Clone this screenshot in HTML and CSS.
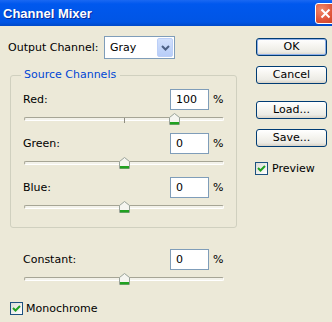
FILE: index.html
```html
<!DOCTYPE html>
<html lang="en">
  <head>
    <meta charset="UTF-8" />
    <title>Channel Mixer</title>
    <link rel="stylesheet" href="styles.css">
  </head>
  <body>
    <div class="titlebar">
      <span class="title">Channel Mixer</span>
      <span class="close-btn">
        <svg width="11" height="11" viewBox="0 0 11 11">
          <path d="M1.5 1.5 L9.5 9.5 M9.5 1.5 L1.5 9.5" stroke="#fff" stroke-width="2" />
        </svg>
      </span>
    </div>

    <div class="dialog">
      <div class="main-col">
        <div class="output-row">
          <span class="output-label">Output Channel:</span>
          <div class="combo">
            <span class="combo-value">Gray</span>
            <span class="combo-btn">
              <svg width="9" height="6" viewBox="0 0 9 6">
                <path d="M1 1 L4.5 4.5 L8 1" fill="none" stroke="#4D6185" stroke-width="2" />
              </svg>
            </span>
          </div>
        </div>

        <fieldset class="group">
          <legend>Source Channels</legend>

          <div class="channel">
            <div class="value-row">
              <span class="value-label">Red:</span>
              <span class="value-box">100</span>
              <span class="unit">%</span>
            </div>
            <div class="slider">
              <div class="track"></div>
              <span class="tick"></span>
              <span class="thumb" style="left: 75%">
                <svg width="11" height="12" viewBox="0 0 11 12">
                  <path d="M0.5 4.5 L5.5 0.5 L10.5 4.5 V11.5 H0.5 Z" fill="#F5F5F0" stroke="#9AA39A" />
                  <rect x="1" y="9" width="9" height="2.5" fill="#21A121" />
                </svg>
              </span>
            </div>
          </div>

          <div class="channel">
            <div class="value-row">
              <span class="value-label">Green:</span>
              <span class="value-box">0</span>
              <span class="unit">%</span>
            </div>
            <div class="slider">
              <div class="track"></div>
              <span class="tick"></span>
              <span class="thumb" style="left: 50%">
                <svg width="11" height="12" viewBox="0 0 11 12">
                  <path d="M0.5 4.5 L5.5 0.5 L10.5 4.5 V11.5 H0.5 Z" fill="#F5F5F0" stroke="#9AA39A" />
                  <rect x="1" y="9" width="9" height="2.5" fill="#21A121" />
                </svg>
              </span>
            </div>
          </div>

          <div class="channel">
            <div class="value-row">
              <span class="value-label">Blue:</span>
              <span class="value-box">0</span>
              <span class="unit">%</span>
            </div>
            <div class="slider">
              <div class="track"></div>
              <span class="tick"></span>
              <span class="thumb" style="left: 50%">
                <svg width="11" height="12" viewBox="0 0 11 12">
                  <path d="M0.5 4.5 L5.5 0.5 L10.5 4.5 V11.5 H0.5 Z" fill="#F5F5F0" stroke="#9AA39A" />
                  <rect x="1" y="9" width="9" height="2.5" fill="#21A121" />
                </svg>
              </span>
            </div>
          </div>
        </fieldset>

        <div class="channel constant">
          <div class="value-row">
            <span class="value-label">Constant:</span>
            <span class="value-box">0</span>
            <span class="unit">%</span>
          </div>
          <div class="slider">
            <div class="track"></div>
            <span class="tick"></span>
            <span class="thumb" style="left: 50%">
              <svg width="11" height="12" viewBox="0 0 11 12">
                <path d="M0.5 4.5 L5.5 0.5 L10.5 4.5 V11.5 H0.5 Z" fill="#F5F5F0" stroke="#9AA39A" />
                <rect x="1" y="9" width="9" height="2.5" fill="#21A121" />
              </svg>
            </span>
          </div>
        </div>

        <div class="check mono-check">
          <span class="check-box">
            <svg width="11" height="11" viewBox="0 0 11 11">
              <path d="M2 5 L4.5 7.5 L9 3" fill="none" stroke="#21A121" stroke-width="2" />
            </svg>
          </span>
          <span>Monochrome</span>
        </div>
      </div>

      <div class="side-col">
        <button class="btn btn-default">OK</button>
        <button class="btn btn-cancel">Cancel</button>
        <button class="btn btn-load">Load...</button>
        <button class="btn btn-save">Save...</button>

        <div class="check preview-check">
          <span class="check-box">
            <svg width="11" height="11" viewBox="0 0 11 11">
              <path d="M2 5 L4.5 7.5 L9 3" fill="none" stroke="#21A121" stroke-width="2" />
            </svg>
          </span>
          <span>Preview</span>
        </div>
      </div>
    </div>
  </body>
</html>
```

FILE: styles.css
```css
body {
  margin: 0;
  width: 332px;
  height: 322px;
  overflow: hidden;
  background-color: #ece9d8;
  font-family: "DejaVu Sans", sans-serif;
  font-size: 11px;
  color: #000;
}

/* title bar */
.titlebar {
  display: flex;
  align-items: center;
  justify-content: space-between;
  height: 26px;
  padding-left: 3px;
  background: linear-gradient(#1a68f2, #0058ee 15%, #0055e5 85%, #0049c8);
}

.title {
  padding-top: 1px;
  font-family: "Liberation Sans", Arial, sans-serif;
  font-size: 13px;
  font-weight: bold;
  color: #fff;
  text-shadow: 1px 1px 0 #0a2a9a;
}

.close-btn {
  display: flex;
  align-items: center;
  justify-content: center;
  box-sizing: border-box;
  width: 21px;
  height: 21px;
  margin-right: -4px;
  border: 1px solid #fff;
  border-radius: 3px;
  background: radial-gradient(circle at 30% 30%, #f08a6c, #e0553a 55%, #c8401f);
}

/* dialog body */
.dialog {
  display: flex;
  padding-top: 10px;
}

.main-col {
  width: 229px;
  margin-left: 8px;
}

.side-col {
  width: 71px;
  margin-left: 19px;
  padding-top: 2px;
}

.output-row {
  display: flex;
  align-items: center;
  height: 23px;
}

.output-label {
  width: 96px;
}

.combo {
  display: flex;
  align-items: center;
  box-sizing: border-box;
  width: 71px;
  height: 23px;
  padding: 1px;
  border: 1px solid #7f9db9;
  background-color: #fff;
}

.combo-value {
  flex: 1;
  padding-left: 4px;
}

.combo-btn {
  display: flex;
  align-items: center;
  justify-content: center;
  box-sizing: border-box;
  width: 16px;
  height: 19px;
  border: 1px solid #bccff7;
  border-radius: 2px;
  background: linear-gradient(#d2e0fc, #b7cdf8);
}

/* source channels group */
.group {
  min-width: 0;
  width: 227px;
  box-sizing: border-box;
  margin: 9px 0 0 2px;
  padding: 7px 12px 14px 12px;
  border: 1px solid #d0d0bf;
  border-radius: 3px;
}

.group legend {
  margin-left: -2px;
  padding: 0 4px 0 3px;
  line-height: 14px;
  color: #0046d5;
}

.channel {
  margin-bottom: 8px;
}

.group .channel:last-child {
  margin-bottom: 0;
}

.value-row {
  display: flex;
  align-items: center;
  height: 21px;
}

.value-label {
  width: 147px;
}

.value-box {
  box-sizing: border-box;
  width: 39px;
  height: 21px;
  padding-left: 5px;
  border: 1px solid #7f9db9;
  background-color: #fff;
  line-height: 19px;
}

.unit {
  margin-left: 4px;
}

/* trackbar */
.slider {
  position: relative;
  display: flex;
  align-items: center;
  height: 12px;
  margin: 3px 0 0 1px;
}

.track {
  flex: 1;
  box-sizing: border-box;
  height: 4px;
  border: 1px solid;
  border-color: #a6a595 #fff #fff #a6a595;
  border-radius: 2px;
  background-color: #f3f2ea;
}

.tick {
  position: absolute;
  left: 50%;
  top: 5px;
  width: 1px;
  height: 5px;
  background-color: #8e8d82;
}

.thumb {
  position: absolute;
  top: 0;
  height: 12px;
  margin-left: -5px;
}

.thumb svg {
  display: block;
}

.constant {
  margin: 21px 0 0 0;
  padding: 0 13px 0 15px;
}

/* checkboxes */
.check {
  display: flex;
  align-items: center;
}

.check-box {
  display: flex;
  align-items: center;
  justify-content: center;
  box-sizing: border-box;
  width: 13px;
  height: 13px;
  margin-right: 3px;
  border: 1px solid #1c5180;
  background: linear-gradient(135deg, #dcdcd7, #fff);
}

.mono-check {
  margin: 17px 0 0 2px;
}

.preview-check {
  margin: 15px 0 0 -1px;
}

.preview-check .check-box {
  margin-right: 4px;
}

/* push buttons */
.btn {
  display: block;
  box-sizing: border-box;
  width: 71px;
  height: 18px;
  padding: 0;
  border: 1px solid #003c74;
  border-radius: 3px;
  background: linear-gradient(#fff, #f5f4ef 45%, #ecebe5 80%, #d8d2c6);
  font-family: inherit;
  font-size: 11px;
  color: #000;
  line-height: 16px;
  text-align: center;
}

.btn-default {
  box-shadow: inset 0 0 0 1px #8fb0ea;
}

.btn-cancel {
  margin-top: 10px;
}

.btn-load {
  margin-top: 17px;
}

.btn-save {
  margin-top: 10px;
}
```
